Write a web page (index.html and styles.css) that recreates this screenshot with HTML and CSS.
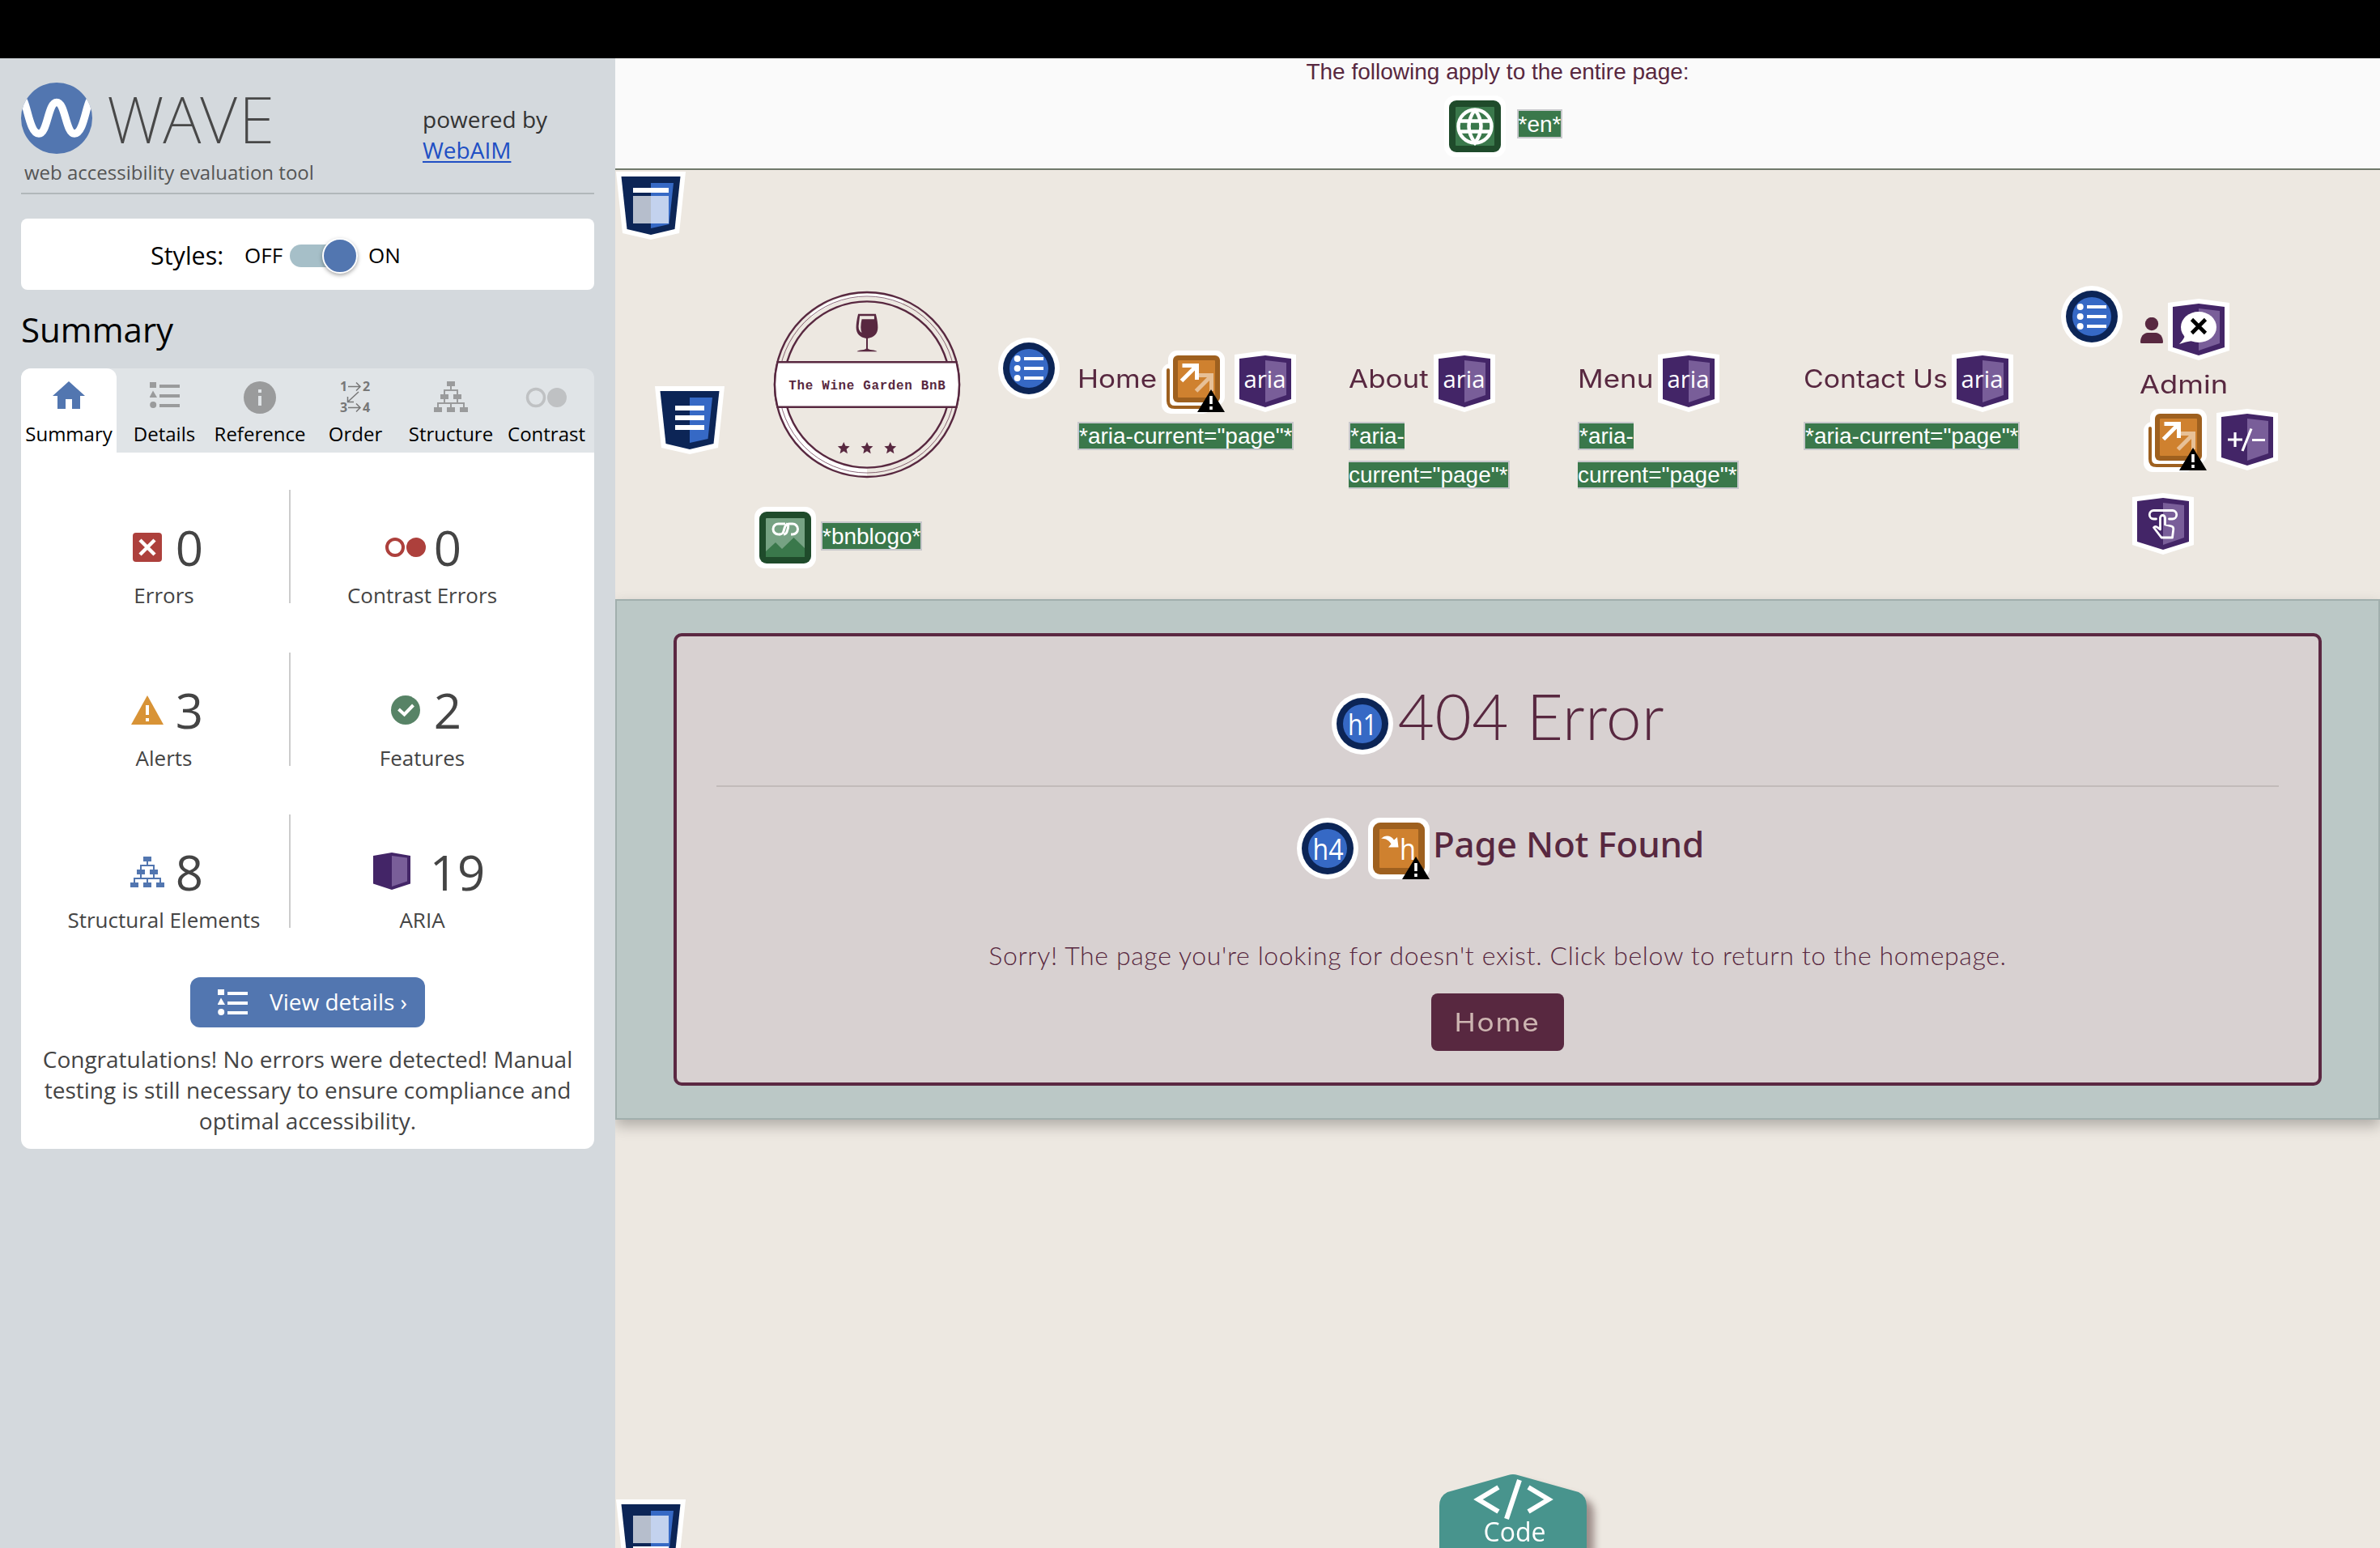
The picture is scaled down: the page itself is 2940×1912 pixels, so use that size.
FILE: index.html
```html
<!DOCTYPE html>
<html lang="en">
<head>
<meta charset="utf-8">
<title>WAVE Report</title>
<link rel="stylesheet" href="styles.css">
</head>
<body>
<svg class="defs" aria-hidden="true">
  <symbol id="i-details" viewBox="0 0 37 32">
    <path d="M0 0h8v8H0zM12 4h25v4H12zM4 11.5l5 8.500H-.5zM12 16h25v4H12zM12 28h25v4H12z" transform="translate(0 -1)"/>
    <circle cx="4.200" cy="28" r="4"/>
  </symbol>
  <symbol id="i-structure" viewBox="0 0 42 38">
    <path d="M16 0h10v6H16zM8 16h10v6H8zM24 16h10v6H24zM0 32h10v6H0zM16 32h10v6H16zM32 32h10v6H32z"/>
    <path d="M21 6v5M13 16v-5h16v5M13 22v5M29 22v5M5 32v-5h32v5M21 27v5" fill="none" stroke="currentColor" stroke-width="2"/>
  </symbol>
  <symbol id="i-shield" viewBox="0 0 76 76">
    <path d="M0 5L38 0l38 5v59L38 76 0 64z" fill="#fff"/>
    <path d="M6 10l32-4 32 4v50l-32 10L6 60z" fill="#432567"/>
    <path d="M38 12l26 3v40l-26 9z" fill="#795e99"/>
  </symbol>
  <symbol id="i-aria" viewBox="0 0 76 76">
    <use href="#i-shield"/>
    <text x="37.500" y="45.500" class="glyph" font-size="30" text-anchor="middle" textLength="52" lengthAdjust="spacingAndGlyphs">aria</text>
  </symbol>
  <symbol id="i-landmark" viewBox="0 0 86 84">
    <path d="M0 0h86l-8 76-35 8L8 76z" fill="#fff"/>
    <path d="M6.500 6h73l-7 65L43 78l-29.500-7z" fill="#0c2556"/>
    <path d="M43 14h28l-5.500 51L43 70z" fill="#3669c5"/>
  </symbol>
  <symbol id="i-round" viewBox="0 0 76 76">
    <circle cx="38" cy="38" r="38" fill="#fff"/>
    <circle cx="38" cy="38" r="32" fill="#0c2556"/>
    <circle cx="38" cy="38" r="24" fill="#3669c5"/>
  </symbol>
  <symbol id="i-list" viewBox="0 0 76 76">
    <use href="#i-round"/>
    <g fill="#fff"><circle cx="23.700" cy="26" r="4"/><circle cx="23.700" cy="38" r="4"/><circle cx="23.700" cy="50" r="4"/><path d="M32 24h24v4H32zM32 36h24v4H32zM32 48h24v4H32z"/></g>
  </symbol>
  <symbol id="i-warn" viewBox="0 0 34 28">
    <path d="M17 0l17 28H0z" fill="#000"/><path d="M15.200 8h3.600v10h-3.600zM15.200 21h3.600v4h-3.600z" fill="#fff"/>
  </symbol>
  <symbol id="i-redundant" viewBox="0 0 78 78">
    <rect x="0" y="16" width="62" height="62" rx="11" fill="#fff"/>
    <rect x="8" y="0" width="70" height="68" rx="11" fill="#fff"/>
    <path d="M8 24v38q0 8 8 8h46" fill="none" stroke="#9e601f" stroke-width="4" stroke-linecap="round"/>
    <rect x="14" y="6" width="58" height="58" rx="6" fill="#9e601f"/>
    <rect x="20" y="12" width="46" height="46" rx="1" fill="#cf812f"/>
    <path d="M42.500 50L61 31.500M46 30.500h15.500V50" fill="none" stroke="#fff" stroke-opacity=".5" stroke-width="5"/>
    <path d="M24.500 37.500L43 19M25.500 18.500h18V36" fill="none" stroke="#fff" stroke-width="5"/>
    <use href="#i-warn" x="44" y="48" width="34" height="28"/>
  </symbol>
</svg>

<div class="topbar"></div>
<div class="app">
  <aside class="sidebar">
    <header class="brand">
      <div>
        <div class="brand-row">
          <svg width="88" height="88" viewBox="0 0 88 88"><clipPath id="disc"><circle cx="44" cy="44" r="44"/></clipPath><circle cx="44" cy="44" r="44" fill="#5276b0"/><path clip-path="url(#disc)" d="M3 22C8 30 11 63 22 63S33 24.500 44 24.500 55 63 66 63 80 30 85 22" fill="none" stroke="#fff" stroke-width="9.500"/></svg>
          <span class="brand-name">WAVE</span>
        </div>
        <div class="tagline">web accessibility evaluation tool</div>
      </div>
      <p class="powered">powered by<br><a href="#">WebAIM</a></p>
    </header>

    <div class="styles-box">
      <span class="styles-label">Styles:</span>
      <span class="onoff">OFF</span>
      <span class="switch"><span class="knob"></span></span>
      <span class="onoff">ON</span>
    </div>

    <h2>Summary</h2>

    <nav class="tabs">
      <div class="tab active"><svg width="60" height="60" viewBox="0 0 60 60"><path d="M30 10l20 18h-6v16H34V32h-8v12H16V28h-6z" fill="#5276b0"/></svg>Summary</div>
      <div class="tab"><svg width="37" height="60"><use href="#i-details" y="11" width="37" height="32" fill="#9a9b9c"/></svg>Details</div>
      <div class="tab"><svg width="60" height="60" viewBox="0 0 60 60"><circle cx="30" cy="30" r="20" fill="#9a9b9c"/><path d="M28 20h4v4h-4zM28 28h4v12h-4z" fill="#e0e4e7"/></svg>Reference</div>
      <div class="tab"><svg width="60" height="60" viewBox="0 0 60 60"><g class="order" font-size="16"><text x="11" y="22">1</text><text x="39" y="22">2</text><text x="11" y="48">3</text><text x="39" y="48">4</text></g><path d="M21 16.500h14M31 11.500l5 5-5 5M21 42.500h14M31 37.500l5 5-5 5M34 23L21 35M20.500 29v6.500H28" fill="none" stroke="#777" stroke-width="1.500"/></svg>Order</div>
      <div class="tab"><svg width="42" height="60" color="#9a9b9c"><use href="#i-structure" y="10" width="42" height="38" fill="currentColor"/></svg>Structure</div>
      <div class="tab"><svg width="60" height="60" viewBox="0 0 60 60"><circle cx="17" cy="30" r="10.500" fill="none" stroke="#bfc1c3" stroke-width="3.500"/><circle cx="43" cy="30" r="12" fill="#bfc1c3"/></svg>Contrast</div>
    </nav>

    <section class="panel">
      <div class="stats">
        <div class="stat"><div class="num"><svg width="56" height="60" viewBox="0 0 56 60"><rect x="10" y="12" width="36" height="36" rx="4" fill="#ad403c"/><path d="M19 21l18 18M37 21L19 39" stroke="#fff" stroke-width="4.500"/></svg>0</div><div class="cap">Errors</div></div>
        <div class="stat"><div class="num"><svg width="56" height="60" viewBox="0 0 56 60"><circle cx="15" cy="30" r="10" fill="none" stroke="#ad403c" stroke-width="4"/><circle cx="41" cy="30" r="12" fill="#ad403c"/></svg>0</div><div class="cap">Contrast Errors</div></div>
        <div class="stat"><div class="num"><svg width="56" height="60" viewBox="0 0 56 60"><path d="M28 12l20 36H8z" fill="#d89336"/><path d="M26 24h4v12h-4zM26 40h4v4h-4z" fill="#fff"/></svg>3</div><div class="cap">Alerts</div></div>
        <div class="stat"><div class="num"><svg width="56" height="60" viewBox="0 0 56 60"><circle cx="28" cy="30" r="18" fill="#578366"/><path d="M19.500 29l7 6.500L37.500 24" fill="none" stroke="#fff" stroke-width="4"/></svg>2</div><div class="cap">Features</div></div>
        <div class="stat"><div class="num"><svg width="56" height="60" color="#5276b0"><use href="#i-structure" x="7" y="11" width="42" height="38" fill="currentColor"/></svg>8</div><div class="cap">Structural Elements</div></div>
        <div class="stat"><div class="num"><svg width="80" height="60" viewBox="0 0 80 60"><path d="M17 10l23-4 23 4v34.500L40 52 17 44.500z" fill="#432567"/><path d="M40 10l19 2.500v29L40 48z" fill="#795e99"/></svg>19</div><div class="cap">ARIA</div></div>
      </div>
      <div class="details-btn"><svg width="38" height="34"><use href="#i-details" width="37" height="32" y="1" fill="#fff"/></svg><span>View details ›</span></div>
      <p class="congrats">Congratulations! No errors were detected! Manual testing is still necessary to ensure compliance and optimal accessibility.</p>
    </section>
  </aside>

  <main class="page">
    <div class="global">
      <div class="global-title">The following apply to the entire page:</div>
      <div class="global-row">
        <svg width="76" height="76" viewBox="0 0 76 76"><rect width="76" height="76" rx="13" fill="#fff"/><rect x="6" y="6" width="64" height="64" rx="9" fill="#1f4b2b"/><rect x="14" y="14" width="48" height="48" rx="1" fill="#3a784b"/><g fill="none" stroke="#fff" stroke-width="4.400"><circle cx="38" cy="38" r="20.500"/><path d="M38 17.500q-15 20.500 0 41q15-20.500 0-41M20 31.500h36M20 44.500h36"/></g></svg>
        <span class="note">*en*</span>
      </div>
    </div>

    <svg class="lm-header" width="86" height="84" viewBox="0 0 86 84"><use href="#i-landmark"/><path d="M21 20h44v6H21z" fill="#fff"/><path d="M21 30h44v34H21z" fill="#fff" fill-opacity=".7"/></svg>

    <div class="navbar">
      <svg class="lm-nav" width="86" height="84" viewBox="0 0 86 84"><use href="#i-landmark"/><path d="M25 24h36v6H25zM25 36h36v6H25zM25 48h36v6H25z" fill="#fff"/></svg>

      <div class="logo">
        <svg class="seal" width="232" height="232" viewBox="-117 -117 234 234">
          <g fill="none" stroke="#582840">
            <path d="M-110.500 29A114 114 0 0 0 0 113.500V105A105 105 0 0 1-100 29z" fill="#fff" stroke="none"/>
            <path d="M-70-86A112 112 0 0 1 45-102" stroke="#fff" stroke-width="4"/>
            <circle r="115" stroke-width="2.400"/>
            <circle r="110" stroke-width=".7"/>
            <circle r="103.500" stroke-width="2.400"/>
          </g>
          <path d="M-111.500-28h223a115 115 0 0 1 0 56h-223a115 115 0 0 1 0-56z" fill="#fff" stroke="#582840" stroke-width="2.400"/>
          <text y="6" font-size="16" text-anchor="middle" textLength="195" class="seal-text">The Wine Garden BnB</text>
          <g fill="#582840">
            <path d="M-11-88h22q2.500 10 2.500 17c0 8-5 12.500-12.500 13.500v12c0 3 10 1.500 11.500 4.500h-25c1.500-3 11.500-1.500 11.500-4.500v-12c-7.500-1-12.500-5.500-12.500-13.500q0-7 2.500-17z"/>
            <path d="M-9-85.500H9v4H-6.500q-2.500 11 0 17-4-2-4-8z" fill="#ede8e1"/>
            <path id="st" d="M0 71.500l2.200 5 5.300.5-4 3.500 1.200 5.500L0 83l-4.700 3 1.200-5.500-4-3.500 5.300-.5z"/>
            <use href="#st" x="-29"/><use href="#st" x="29"/>
          </g>
        </svg>
        <div class="logo-row">
          <svg width="76" height="76" viewBox="0 0 76 76"><rect width="76" height="76" rx="13" fill="#fff"/><rect x="6" y="6" width="64" height="64" rx="9" fill="#1f4b2b"/><rect x="14" y="14" width="48" height="48" rx="1" fill="#76a283"/><path d="M14 55l12-11 8 8 14.500-14L62 51v11H14z" fill="#3a784b"/><g fill="none" stroke="#fff" stroke-width="3"><path d="M32 34h-2.500a6.500 6.500 0 0 1 0-13H38"/><path d="M31 34q4 0 5-4l1.500-5q1.500-4 6-4H47a6.500 6.500 0 0 1 0 13H45"/><path d="M39 21q3.500 1 2.500 5l-1.500 5q-1.500 3-4 3"/></g></svg>
          <span class="note">*bnblogo*</span>
        </div>
      </div>

      <svg class="list-a" width="76" height="76"><use href="#i-list"/></svg>

      <div class="menu">
        <div class="item home"><div class="item-row"><span class="link">Home</span><svg width="78" height="78"><use href="#i-redundant"/></svg><svg width="76" height="76"><use href="#i-aria"/></svg></div><div class="desc"><span class="note">*aria-current="page"*</span></div></div>
        <div class="item about"><div class="item-row"><span class="link">About</span><svg width="76" height="76"><use href="#i-aria"/></svg></div><div class="desc"><span class="note">*aria-<br>current="page"*</span></div></div>
        <div class="item food"><div class="item-row"><span class="link">Menu</span><svg width="76" height="76"><use href="#i-aria"/></svg></div><div class="desc"><span class="note">*aria-<br>current="page"*</span></div></div>
        <div class="item contact"><div class="item-row"><span class="link">Contact Us</span><svg width="76" height="76"><use href="#i-aria"/></svg></div><div class="desc"><span class="note">*aria-current="page"*</span></div></div>
      </div>

      <svg class="list-b" width="76" height="76"><use href="#i-list"/></svg>

      <div class="admin">
        <div class="admin-user">
          <svg width="28" height="32" viewBox="0 0 28 32"><circle cx="14" cy="8" r="8.200" fill="#582840"/><path d="M0 30.500C0 24 4 19 9 19h10c5 0 9 5 9 11.500q0 1.500-1.500 1.500h-25Q0 32 0 30.500z" fill="#582840"/></svg>
          <svg width="76" height="76" viewBox="0 0 76 76"><use href="#i-shield"/><ellipse cx="38" cy="35" rx="22" ry="19" fill="#fff"/><path d="M21 45q-1 5-7 11 8-3 16-4z" fill="#fff"/><path d="M29.500 25.500l17 17M46.500 25.500l-17 17" stroke="#000" stroke-width="4.600"/></svg>
        </div>
        <div class="link">Admin</div>
        <div class="admin-tools"><svg width="78" height="78"><use href="#i-redundant"/></svg><svg width="76" height="76" viewBox="0 0 76 76"><use href="#i-shield"/><path d="M14 38h18M23 29v18M32 52L43 24.500M44 38.500h16" stroke="#fff" stroke-width="3.200"/></svg></div>
        <svg class="touch" width="76" height="76" viewBox="0 0 76 76"><use href="#i-shield"/><g fill="none" stroke="#fff" stroke-width="2.800" stroke-linejoin="round" stroke-linecap="round"><path d="M29.500 32H26.500a5 5 0 0 1 0-10.500h23a5 5 0 0 1 0 10.500H45.500"/><path d="M34.500 45V30.500a3 3 0 0 1 6 0V39l8 2q2.500.8 2.300 3.500L49.500 55H36L26.500 42.500q2-2.500 5 .2z"/></g></svg>
      </div>
    </div>

    <div class="band">
      <div class="card">
        <h1><svg width="76" height="76" viewBox="0 0 76 76"><use href="#i-round"/><text x="38" y="52" class="glyph" font-size="36" text-anchor="middle" textLength="36" lengthAdjust="spacingAndGlyphs">h1</text></svg><span>404 Error</span></h1>
        <hr>
        <h4><svg width="76" height="76" viewBox="0 0 76 76"><use href="#i-round"/><text x="38.500" y="52" class="glyph" font-size="36" text-anchor="middle" textLength="38" lengthAdjust="spacingAndGlyphs">h4</text></svg><svg width="76" height="76" viewBox="0 0 76 76"><rect width="76" height="76" rx="14" fill="#fff"/><rect x="6" y="6" width="64" height="64" rx="9" fill="#9e601f"/><rect x="14" y="14" width="48" height="48" rx="1" fill="#cf812f"/><text x="39" y="52" class="glyph" font-size="36" textLength="20" lengthAdjust="spacingAndGlyphs">h</text><path d="M16 26c5-5 12-4.500 16 1.500l4-3.500 1.500 12.500H25l3.500-4C26 28 21 25 16 26z" fill="#fff"/><use href="#i-warn" x="42" y="48" width="34" height="28"/></svg><span>Page Not Found</span></h4>
        <p class="sorry">Sorry! The page you're looking for doesn't exist. Click below to return to the homepage.</p>
        <a class="home-btn" href="#"><span>Home</span></a>
      </div>
    </div>

    <svg class="lm-footer" width="86" height="84" viewBox="0 0 86 84"><use href="#i-landmark"/><path d="M21 20h44v34H21z" fill="#fff" fill-opacity=".7"/><path d="M21 58h44v6H21z" fill="#fff"/></svg>

    <div class="code-tab">
      <svg class="code-shape" width="182" height="92" viewBox="0 0 182 92"><path d="M0 92V40q0-12 10-17L85 2q6-2 12 0l75 21q10 5 10 17v52z" fill="#48948d"/><path d="M73 17L48 32l25 15M110 17l25 15-25 15M99 8L83 56" fill="none" stroke="#fff" stroke-width="6"/></svg>
      <span class="code-label">Code</span>
    </div>
  </main>
</div>
</body>
</html>
```
FILE: styles.css
```css
* { box-sizing: border-box; }
body { margin: 0; width: 2940px; height: 1912px; overflow: hidden; font-family: "Open Sans", "Noto Sans", sans-serif; background: #ede8e1; }
svg { display: block; flex: none; }
.defs { width: 0; height: 0; position: absolute; }
h1, h2, h4, p { margin: 0; font-weight: 400; }
.glyph { fill: #fff; font-family: "Open Sans", sans-serif; font-weight: 400; letter-spacing: 0; }

.topbar { height: 72px; background: #000; }
.app { display: flex; height: 1840px; }

/* sidebar */
.sidebar { width: 760px; flex: none; padding: 0 26px; background: #d4d9dd; }
.brand { display: flex; height: 168px; border-bottom: 2px solid #b1b8ba; padding-top: 30px; }
.brand-row { display: flex; height: 88px; }
.brand-name { margin-left: 18px; width: 390px; font: 200 80px/88px "Noto Sans", sans-serif; letter-spacing: 2px; color: #484848; }
.tagline { margin: 8px 0 0 4px; font-size: 24px; line-height: 30px; color: #555; }
.powered { margin-top: 26px; font-size: 28px; line-height: 38px; color: #333; white-space: nowrap; }
.powered a { color: #204fc4; text-underline-offset: 3px; }

.styles-box { display: flex; align-items: center; height: 88px; margin-top: 30px; padding: 5px 0 0 160px; background: #fff; border-radius: 8px; color: #000; line-height: 40px; }
.styles-label { font-size: 30.5px; width: 116px; margin-top: -4px; }
.onoff { font-size: 26px; width: 56px; margin-top: -4px; }
.switch { width: 84px; height: 28px; border-radius: 14px; background: #a6bfc8; margin: -1px 13px 0 0; display: flex; align-items: center; justify-content: flex-end; }
.knob { width: 44px; height: 44px; border-radius: 50%; background: #5276b0; border: 2px solid #fff; box-shadow: 0 2px 5px rgba(0,0,0,.35); }

.sidebar h2 { height: 97px; padding-top: 20px; font-size: 42px; line-height: 57px; color: #000; }

.tabs { display: grid; grid-template-columns: repeat(6, 118px); height: 104px; background: #e0e4e7; border-radius: 12px 12px 0 0; }
.tab { display: flex; flex-direction: column; align-items: center; padding-top: 6px; font-size: 24px; line-height: 30px; color: #000; }
.tab.active { background: #fff; border-radius: 12px 12px 0 0; }
.order { fill: #777; font-weight: 700; font-family: "Open Sans", sans-serif; }

.panel { height: 860px; background: #fff; border-radius: 0 0 12px 12px; padding-top: 46px; display: flex; flex-direction: column; align-items: center; color: #444; }
.stats { align-self: stretch; display: grid; grid-template-columns: 313px 313px; padding-left: 20px; row-gap: 60.5px; }
.stat { height: 140px; padding-top: 39px; text-align: center; line-height: 34px; font-size: 26px; white-space: nowrap; }
.stat:nth-child(odd) { border-right: 2px solid #ccc; padding-left: 2px; }
.stat:nth-child(even) { padding-left: 12px; }
.num { display: flex; justify-content: center; align-items: center; gap: 7px; height: 64px; font-size: 60px; line-height: 64px; }
.cap { margin-top: 10px; }
.details-btn { display: flex; align-items: center; width: 290px; height: 62px; margin-top: 61px; padding-left: 34px; gap: 26px; border-radius: 12px; background: #5276b0; color: #fff; font-size: 28px; line-height: 38px; white-space: nowrap; }
.details-btn span { padding-bottom: 2px; }
.congrats { width: 670px; margin-top: 20px; font-size: 28px; line-height: 38px; text-align: center; }

/* evaluated page */
.page { position: relative; flex: 1; min-width: 0; display: flex; flex-direction: column; overflow: hidden; background: #ede8e1; color: #582840; }
.global { flex: none; height: 138px; background: #fafafa; border-bottom: 2px solid #70796b; display: flex; flex-direction: column; align-items: center; }
.global-title { font: 28px/34px "Liberation Sans", sans-serif; height: 46px; }
.global-row { display: flex; gap: 14px; margin-left: 14px; }
.global-row .note { margin-top: 17px; }
.note { font: 28px/33px "Liberation Sans", sans-serif; background: #3a784b; color: #fff; border: 2px solid #c8c8cc; height: 36px; white-space: nowrap; }
.lm-header { margin: 2px 0 0 1px; }

.navbar { height: 444px; flex: none; display: flex; align-items: flex-start; }
.lm-nav { margin: 181px 0 0 49px; }
.logo { width: 255px; margin: 63px 0 0 37px; }
.seal { margin-left: 23px; }
.seal-text { font-family: "Liberation Mono", monospace; font-weight: 700; fill: #582840; }
.logo-row { display: flex; gap: 6px; margin-top: 35px; }
.logo-row .note { margin-top: 18px; }
.list-a { margin: 121px 0 0 46px; }
.menu { display: flex; margin: 137px 0 0 22px; }
.item-row { display: flex; height: 76px; }
.link { font: 400 31px/40px Inter, sans-serif; white-space: nowrap; color: #582840; transform: scaleX(1.13); transform-origin: 0 50%; }
.item .link { margin-top: 15px; }
.home { width: 335px; }
.home .link { width: 104px; }
.home .item-row svg + svg { margin-left: 12px; }
.about { width: 283px; }
.about .link { width: 105px; }
.food { width: 279px; }
.food .link { width: 99px; }
.contact { width: 300px; }
.contact .link { width: 183px; transform: scaleX(1.09); }
.desc { margin-top: 6px; height: 96px; font: 28px/48px "Liberation Sans", sans-serif; }
.desc .note { line-height: 48px; }
.list-b { margin: 57px 0 0 18px; }
.admin { margin: 73px 0 0 12px; }
.admin-user { display: flex; gap: 6px; padding-left: 10px; }
.admin-user svg:first-child { margin-top: 23px; }
.admin .link { margin: 10px 0 0 9px; height: 50px; transform: scaleX(1.17); }
.admin-tools { display: flex; gap: 12px; padding-left: 14px; }
.touch { margin-top: 26px; }

.band { flex: none; height: 643px; padding: 40px 70px; background: #bbc8c6; border: 2px solid #a1afad; box-shadow: 0 8px 16px rgba(0,0,0,.25); }
.card { height: 559px; border: 4px solid #5b2842; border-radius: 10px; background: #d8d1d1; padding: 0 49px; display: flex; flex-direction: column; align-items: center; }
.card h1 { display: flex; height: 184px; padding: 70px 0 0 1px; gap: 6px; font: 300 78px/90px Lato, sans-serif; letter-spacing: .5px; white-space: nowrap; }
.card h1 span { margin-top: -17px; }
.card hr { align-self: stretch; margin: 0; border: 0; height: 2px; background: #c2bbba; }
.card h4 { display: flex; height: 176px; padding: 38px 0 0 7px; gap: 12px; font: 500 44px/60px "Noto Sans", sans-serif; letter-spacing: -.2px; white-space: nowrap; }
.card h4 span { margin: 2px 0 0 -8px; }
.sorry { font: 300 32px/48px Lato, sans-serif; letter-spacing: .64px; white-space: nowrap; margin-top: 8px; }
.home-btn { width: 164px; height: 71px; margin-top: 23px; border-radius: 8px; background: #582840; color: #cdb5b1; font: 400 31px/71px Inter, sans-serif; letter-spacing: 1.6px; text-align: center; text-decoration: none; }
.home-btn span { display: inline-block; transform: scaleX(1.14); }

.lm-footer { margin: 469px 0 0 1px; }
.code-tab { position: absolute; left: 1018px; bottom: 0; width: 182px; height: 92px; filter: drop-shadow(9px 9px 5px rgba(60,30,30,.45)); }
.code-label { position: absolute; left: 0; right: 4px; bottom: -2px; padding-left: 8px; text-align: center; color: #fff; font-size: 32px; line-height: 44px; }
```
